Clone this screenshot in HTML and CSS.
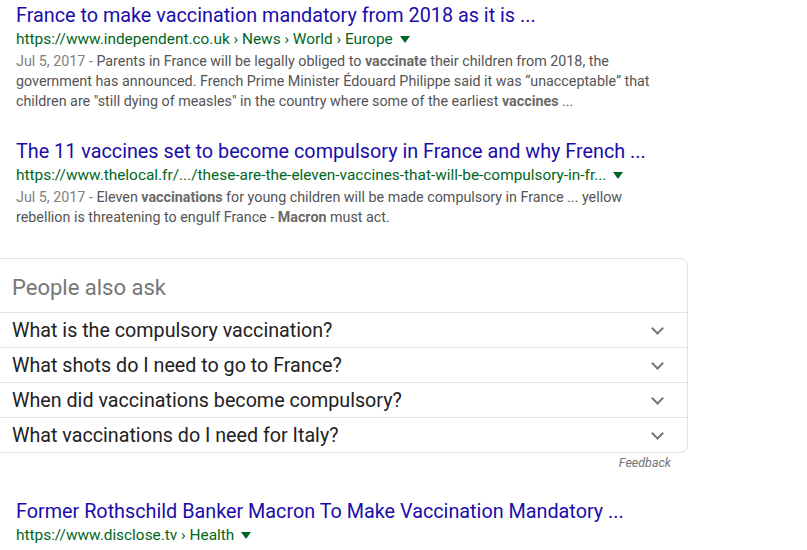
FILE: index.html
```html
<!DOCTYPE html>
<html lang="en">
<head>
    <meta charset="UTF-8">
    <meta name="viewport" content="width=device-width, initial-scale=1.0">
    <title>vaccination mandatory France - Search</title>
    <link rel="stylesheet" href="styles.css">
</head>
<body>
    <div class="results">
        <div class="result first">
            <a class="title" href="#">France to make vaccination mandatory from 2018 as it is ...</a>
            <div class="cite">https://www.independent.co.uk &rsaquo; News &rsaquo; World &rsaquo; Europe <span class="arrow"></span></div>
            <div class="snippet"><span class="date">Jul 5, 2017 - </span>Parents in France will be legally obliged to <b>vaccinate</b> their children from 2018, the government has announced. French Prime Minister Édouard Philippe said it was “unacceptable” that children are "still dying of measles" in the country where some of the earliest <b>vaccines</b> ...</div>
        </div>

        <div class="result">
            <a class="title" href="#">The 11 vaccines set to become compulsory in France and why French ...</a>
            <div class="cite">https://www.thelocal.fr/.../these-are-the-eleven-vaccines-that-will-be-compulsory-in-fr... <span class="arrow"></span></div>
            <div class="snippet"><span class="date">Jul 5, 2017 - </span>Eleven <b>vaccinations</b> for young children will be made compulsory in France ... yellow rebellion is threatening to engulf France - <b>Macron</b> must act.</div>
        </div>
    </div>

    <div class="paa">
        <div class="paa-head">People also ask</div>
        <div class="question">What is the compulsory vaccination?<span class="chev"></span></div>
        <div class="question">What shots do I need to go to France?<span class="chev"></span></div>
        <div class="question">When did vaccinations become compulsory?<span class="chev"></span></div>
        <div class="question">What vaccinations do I need for Italy?<span class="chev"></span></div>
    </div>
    <div class="feedback">Feedback</div>

    <div class="results">
        <div class="result last">
            <a class="title" href="#">Former Rothschild Banker Macron To Make Vaccination Mandatory ...</a>
            <div class="cite">https://www.disclose.tv &rsaquo; Health <span class="arrow"></span></div>
        </div>
    </div>
</body>
</html>
```

FILE: styles.css
```css
body {
    margin: 0;
    font-family: Roboto, Arial, sans-serif;
    background-color: #fff;
}

.results {
    padding-left: 16px;
}

.result {
    margin-top: 28px;
    width: 645px;
}

.result.first {
    margin-top: 3px;
}

.result.last {
    margin-top: 28px;
}

.title {
    display: block;
    font-size: 19.8px;
    line-height: 26px;
    color: #1a0dab;
    text-decoration: none;
    white-space: nowrap;
}

.cite {
    font-size: 15.4px;
    line-height: 21px;
    color: #006621;
    white-space: nowrap;
}

.arrow {
    display: inline-block;
    margin-left: 3px;
    vertical-align: middle;
    border-left: 5px solid transparent;
    border-right: 5px solid transparent;
    border-top: 7px solid #006621;
}

.snippet {
    margin-top: 1px;
    font-size: 14.3px;
    line-height: 20px;
    color: #545454;
}

.snippet b {
    color: #6a6a6a;
}

.date {
    color: #808080;
}

.paa {
    margin-top: 31px;
    width: 687px;
    border: 1px solid #dfe1e5;
    border-left: none;
    border-radius: 0 8px 8px 0;
}

.paa-head {
    padding: 4px 12px 0;
    height: 49px;
    line-height: 49px;
    font-size: 22px;
    color: #777;
}

.question {
    display: flex;
    justify-content: space-between;
    align-items: center;
    height: 34px;
    padding: 0 25px 0 12px;
    border-top: 1px solid #dfe1e5;
    font-size: 19.7px;
    color: #222;
}

.chev {
    width: 7px;
    height: 7px;
    margin-top: -4px;
    border-right: 2px solid #70757a;
    border-bottom: 2px solid #70757a;
    transform: rotate(45deg);
}

.feedback {
    width: 671px;
    text-align: right;
    margin-top: 2px;
    font-size: 12.5px;
    line-height: 16px;
    font-style: italic;
    color: #70757a;
}
```
